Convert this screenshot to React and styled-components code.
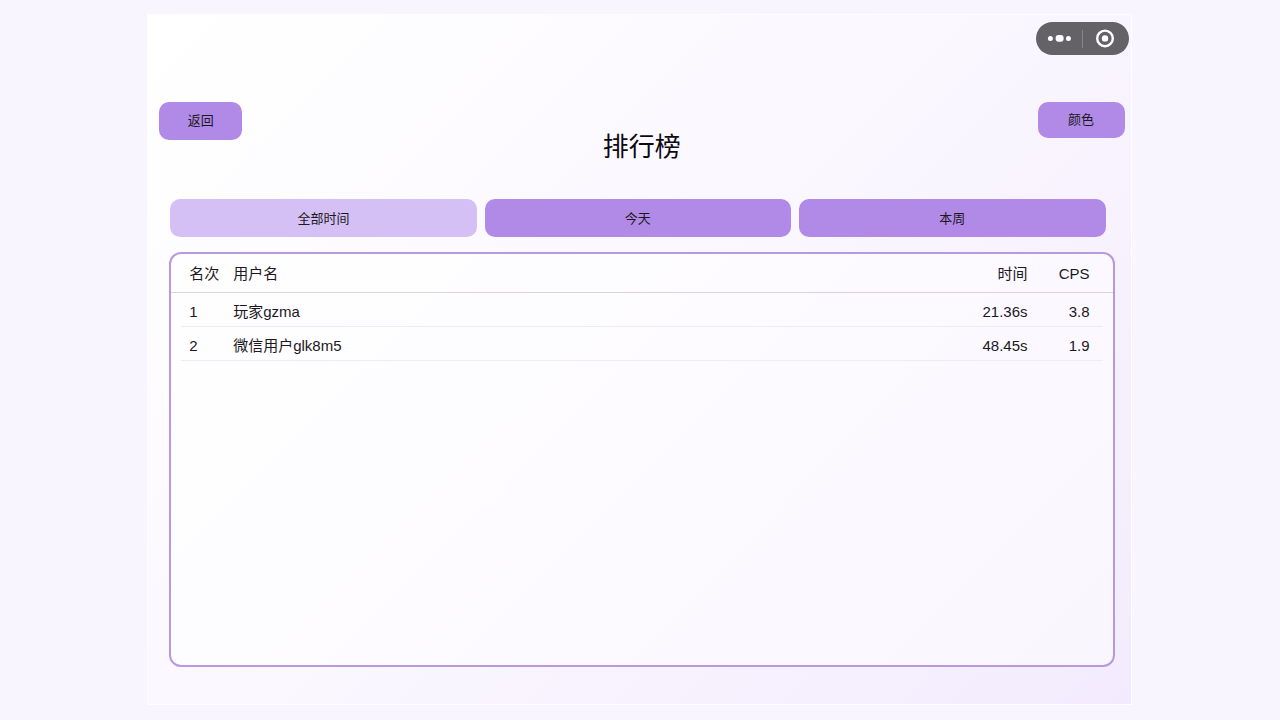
import React, { useState } from "react";
import styled, { createGlobalStyle } from "styled-components";

const GlobalStyle = createGlobalStyle`
  *, *::before, *::after { box-sizing: border-box; }
  body {
    margin: 0;
    background: #f8f5ff;
    color: #1c1822;
    font-family: "Liberation Sans", "Noto Sans CJK SC", sans-serif;
  }
  button { font-family: inherit; color: inherit; cursor: pointer; }
`;

const Page = styled.div`
  display: flex;
  min-height: 100vh;
  padding: 14px 11.6% 15px 11.5%;
`;

const Screen = styled.main`
  flex: 1;
  display: flex;
  flex-direction: column;
  min-width: 0;
  padding: 7px 0 37px;
  border: 1px solid #fffdff;
  background: linear-gradient(135deg, #ffffff 0%, #faf7ff 50%, #f3ebfd 100%);
`;

const StatusBar = styled.div`
  display: flex;
  justify-content: flex-end;
  padding-right: 2px;
`;

const Capsule = styled.div`
  display: flex;
  align-items: center;
  width: 93px;
  height: 33px;
  border-radius: 17px;
  background: #646267;
`;

const CapsuleButton = styled.button`
  flex: 1;
  display: flex;
  align-items: center;
  justify-content: center;
  height: 33px;
  padding: 0;
  border: 0;
  background: none;
`;

const CapsuleDivider = styled.span`
  width: 1px;
  height: 18px;
  background: #858387;
`;

const Toolbar = styled.header`
  display: grid;
  grid-template-columns: 1fr auto 1fr;
  align-items: start;
  padding: 47px 6px 0 11px;
`;

const PillButton = styled.button`
  justify-self: ${(p) => p.$side};
  width: ${(p) => p.$width}px;
  height: ${(p) => p.$height}px;
  padding: 0;
  border: 0;
  border-radius: 10px;
  background: #b08ae6;
  font-size: 13px;
  line-height: 20px;
`;

const Title = styled.h1`
  margin: 25px 0 0;
  font-size: 26px;
  font-weight: 400;
  line-height: 40px;
  color: #0c0a10;
`;

const Tabs = styled.div`
  display: grid;
  grid-template-columns: repeat(3, 1fr);
  gap: 8px;
  padding: 32px 25px 0 22px;
`;

const Tab = styled.button`
  height: 38px;
  padding: 2px 0 0;
  border: 0;
  border-radius: 10px;
  background: ${(p) => (p.$active ? "#d4c0f4" : "#b08ae6")};
  font-size: 13px;
  line-height: 20px;
`;

const Board = styled.section`
  flex: 1;
  margin: 15px 16px 0 21px;
  border: 2px solid #b899de;
  border-radius: 12px;
  background: rgba(255, 255, 255, 0.5);
`;

const Table = styled.table`
  display: block;
  font-size: 15px;
  line-height: 20px;
  text-align: left;
`;

const Head = styled.thead`
  display: block;
  border-bottom: 1px solid #d9d2e2;
`;

const Body = styled.tbody`
  display: block;
  padding: 0 10px;
`;

const Row = styled.tr`
  display: grid;
  grid-template-columns: 44px 1fr 80px 62px;
  align-items: center;
  height: ${(p) => (p.$head ? 38 : 34)}px;
  padding: ${(p) => (p.$head ? "2px 23px 0 18px" : "4px 13px 0 8px")};
  border-bottom: ${(p) => (p.$head ? "0" : "1px solid #eeebf2")};
`;

const HeadCell = styled.th`
  padding: 0;
  font-weight: 400;
  text-align: ${(p) => (p.$end ? "right" : "left")};
`;

const Cell = styled.td`
  padding: 0;
  text-align: ${(p) => (p.$end ? "right" : "left")};
`;

const periods = ["全部时间", "今天", "本周"];

const players = [
  { rank: 1, name: "玩家gzma", time: "21.36s", cps: "3.8" },
  { rank: 2, name: "微信用户glk8m5", time: "48.45s", cps: "1.9" },
];

function MoreIcon() {
  return (
    <svg width="24" height="8" viewBox="0 0 24 8" fill="#fff" aria-hidden="true">
      <circle cx="3.4" cy="3.4" r="2.5" />
      <rect x="8.6" y="0" width="8" height="6.8" rx="3" />
      <circle cx="21.4" cy="3.4" r="2.5" />
    </svg>
  );
}

function TargetIcon() {
  return (
    <svg width="20" height="20" viewBox="0 0 20 20" aria-hidden="true">
      <circle cx="9" cy="9.4" r="7.8" fill="none" stroke="#fff" strokeWidth="2.4" />
      <circle cx="9" cy="9.4" r="3.2" fill="#fff" />
    </svg>
  );
}

export default function App() {
  const [period, setPeriod] = useState(periods[0]);
  return (
    <>
      <GlobalStyle />
      <Page>
        <Screen>
          <StatusBar>
            <Capsule>
              <CapsuleButton aria-label="更多"><MoreIcon /></CapsuleButton>
              <CapsuleDivider />
              <CapsuleButton aria-label="关闭"><TargetIcon /></CapsuleButton>
            </Capsule>
          </StatusBar>
          <Toolbar>
            <PillButton $side="start" $width={83} $height={38}>返回</PillButton>
            <Title>排行榜</Title>
            <PillButton $side="end" $width={87} $height={36}>颜色</PillButton>
          </Toolbar>
          <Tabs>
            {periods.map((p) => (
              <Tab key={p} $active={p === period} aria-pressed={p === period} onClick={() => setPeriod(p)}>
                {p}
              </Tab>
            ))}
          </Tabs>
          <Board>
            <Table>
              <Head>
                <Row $head>
                  <HeadCell scope="col">名次</HeadCell>
                  <HeadCell scope="col">用户名</HeadCell>
                  <HeadCell scope="col" $end>时间</HeadCell>
                  <HeadCell scope="col" $end>CPS</HeadCell>
                </Row>
              </Head>
              <Body>
                {players.map((p) => (
                  <Row key={p.rank}>
                    <Cell>{p.rank}</Cell>
                    <Cell>{p.name}</Cell>
                    <Cell $end>{p.time}</Cell>
                    <Cell $end>{p.cps}</Cell>
                  </Row>
                ))}
              </Body>
            </Table>
          </Board>
        </Screen>
      </Page>
    </>
  );
}
